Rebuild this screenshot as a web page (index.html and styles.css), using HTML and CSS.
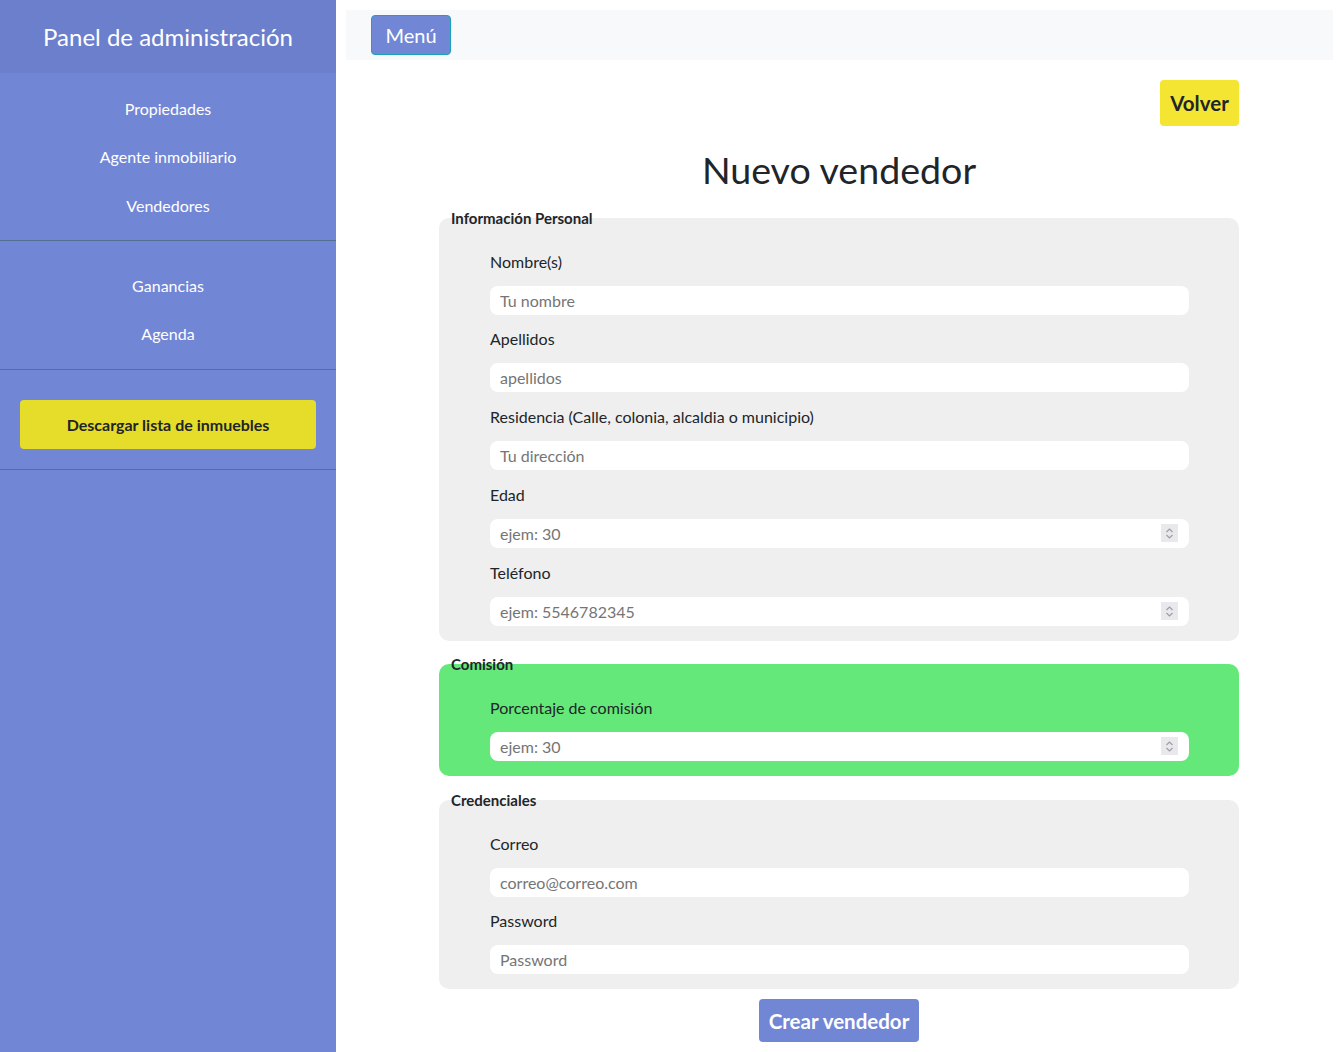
FILE: index.html
```html
<!DOCTYPE html>
<html lang="es">
<head>
<meta charset="utf-8">
<title>Nuevo vendedor</title>
<link rel="stylesheet" href="styles.css">
</head>
<body>
<div class="layout">
  <aside class="sidebar">
    <div class="sidebar-header">Panel de administración</div>
    <nav class="side-section sec-a">
      <a class="side-link" href="#">Propiedades</a>
      <a class="side-link" href="#">Agente inmobiliario</a>
      <a class="side-link" href="#">Vendedores</a>
    </nav>
    <nav class="side-section sec-b">
      <a class="side-link" href="#">Ganancias</a>
      <a class="side-link" href="#">Agenda</a>
    </nav>
    <div class="side-section sec-c">
      <a class="download-btn" href="#">Descargar lista de inmuebles</a>
    </div>
  </aside>
  <main class="main">
    <div class="topbar">
      <button class="menu-btn" type="button">Menú</button>
    </div>
    <div class="content">
      <div class="back-row"><a class="back-btn" href="#">Volver</a></div>
      <h1 class="title">Nuevo vendedor</h1>
      <form class="form">
        <fieldset class="box first">
          <legend class="box-legend">Información Personal</legend>
          <div class="fields">
            <label class="field-label">Nombre(s)</label>
            <input class="field-input tight" type="text" placeholder="Tu nombre">
            <label class="field-label">Apellidos</label>
            <input class="field-input" type="text" placeholder="apellidos">
            <label class="field-label">Residencia (Calle, colonia, alcaldia o municipio)</label>
            <input class="field-input" type="text" placeholder="Tu dirección">
            <label class="field-label">Edad</label>
            <div class="num-wrap">
              <input class="field-input num" type="number" placeholder="ejem: 30">
              <span class="spin"><svg width="17" height="17" viewBox="0 0 17 17"><path d="M5.5 7 L8.5 4 L11.5 7 M5.5 10 L8.5 13 L11.5 10" fill="none" stroke="#9d9da6" stroke-width="1.2"/></svg></span>
            </div>
            <label class="field-label">Teléfono</label>
            <div class="num-wrap last">
              <input class="field-input num" type="number" placeholder="ejem: 5546782345">
              <span class="spin"><svg width="17" height="17" viewBox="0 0 17 17"><path d="M5.5 7 L8.5 4 L11.5 7 M5.5 10 L8.5 13 L11.5 10" fill="none" stroke="#9d9da6" stroke-width="1.2"/></svg></span>
            </div>
          </div>
        </fieldset>
        <fieldset class="box green">
          <legend class="box-legend">Comisión</legend>
          <div class="fields">
            <label class="field-label">Porcentaje de comisión</label>
            <div class="num-wrap last">
              <input class="field-input num" type="number" placeholder="ejem: 30">
              <span class="spin"><svg width="17" height="17" viewBox="0 0 17 17"><path d="M5.5 7 L8.5 4 L11.5 7 M5.5 10 L8.5 13 L11.5 10" fill="none" stroke="#9d9da6" stroke-width="1.2"/></svg></span>
            </div>
          </div>
        </fieldset>
        <fieldset class="box">
          <legend class="box-legend">Credenciales</legend>
          <div class="fields">
            <label class="field-label">Correo</label>
            <input class="field-input tight" type="email" placeholder="correo@correo.com">
            <label class="field-label">Password</label>
            <input class="field-input last" type="password" placeholder="Password">
          </div>
        </fieldset>
        <div class="submit-row"><button class="submit-btn" type="button">Crear vendedor</button></div>
      </form>
    </div>
  </main>
</div>
</body>
</html>
```
FILE: styles.css
```css
* { box-sizing: border-box; }
html, body { margin: 0; padding: 0; }
body {
  font-family: Lato, "Open Sans", sans-serif;
  color: #212529;
  background: #fff;
}
.layout {
  display: flex;
  min-height: 1052px;
}
.sidebar {
  width: 336px;
  flex: 0 0 336px;
  background: #7286d6;
  color: #fff;
}
.sidebar-header {
  height: 73px;
  background: #6b7fcc;
  display: flex;
  align-items: center;
  justify-content: center;
  font-size: 24px;
}
.side-section {
  display: flex;
  flex-direction: column;
  border-bottom: 1px solid #52708f;
}
.sec-a { padding: 11px 0 10.5px; }
.sec-a .side-link { height: 48.5px; }
.sec-b { padding: 20px 0 11px; }
.sec-b .side-link { height: 48.5px; }
.sec-c { padding: 30px 20px 20px; }
.side-link {
  height: 48px;
  display: flex;
  align-items: center;
  justify-content: center;
  color: #fff;
  text-decoration: none;
  font-size: 16px;
}
.download-btn {
  height: 49px;
  display: flex;
  align-items: center;
  justify-content: center;
  background: #e6dc2a;
  border-radius: 4px;
  color: #212529;
  font-weight: 700;
  font-size: 16px;
  text-decoration: none;
}
.main {
  flex: 1;
  padding: 10px;
}
.topbar {
  height: 50px;
  background: #f8f9fa;
  display: flex;
  align-items: center;
  padding-left: 25px;
}
.menu-btn {
  height: 40px;
  width: 80px;
  background: #7286d6;
  border: 1px solid #1ba2b8;
  border-radius: 4px;
  color: #fff;
  font-family: inherit;
  font-size: 20px;
  padding: 0;
}
.content {
  width: 801px;
  padding-right: 1px;
  margin: 0 auto;
}
.back-row {
  display: flex;
  justify-content: flex-end;
  margin-top: 20px;
}
.back-btn {
  width: 79px;
  height: 46px;
  display: flex;
  align-items: center;
  justify-content: center;
  background: #f3e532;
  border-radius: 4px;
  color: #212529;
  font-weight: 700;
  font-size: 20.5px;
  text-decoration: none;
}
.title {
  margin: 20px 0 15px;
  text-align: center;
  font-weight: 400;
  font-size: 37.6px;
  line-height: 48px;
}
.box {
  margin: 0 0 15px;
  border: 0;
  border-radius: 10px;
  background: #efefef;
  padding: 0 12px 15px;
  min-width: 0;
}
.box.first { margin-bottom: 14px; }
.box.green { background: #64e87a; }
.box-legend {
  padding: 0;
  font-weight: 700;
  font-size: 15px;
  line-height: 18px;
}
.fields {
  display: flex;
  flex-direction: column;
  padding: 25px 38px 0 39px;
}
.field-label {
  font-size: 16px;
  line-height: 20px;
  margin-bottom: 14px;
}
.field-input {
  height: 29px;
  border: 0;
  border-radius: 8px;
  background: #fff;
  padding: 0 10px;
  font-family: inherit;
  font-size: 16px;
  color: #212529;
  margin-bottom: 15px;
}
.field-input.tight { margin-bottom: 14px; }
.field-input.last { margin-bottom: 0; }
.field-input::placeholder { color: #757575; }
.num-wrap {
  position: relative;
  display: flex;
  flex-direction: column;
  margin-bottom: 15px;
}
.num-wrap.last { margin-bottom: 0; }
.num-wrap .field-input { margin-bottom: 0; width: 100%; }
.field-input.num { -moz-appearance: textfield; }
.field-input.num::-webkit-inner-spin-button,
.field-input.num::-webkit-outer-spin-button {
  -webkit-appearance: none;
  margin: 0;
}
.spin {
  position: absolute;
  right: 11px;
  top: 5px;
  width: 17px;
  height: 18px;
  background: #e9e9ed;
  display: flex;
  align-items: center;
  justify-content: center;
}
.spin svg { display: block; }
.submit-row {
  display: flex;
  justify-content: center;
  margin-top: -5px;
}
.submit-btn {
  width: 160px;
  height: 43px;
  background: #7286d6;
  border: 0;
  border-radius: 4px;
  color: #fff;
  font-family: inherit;
  font-weight: 700;
  font-size: 20.5px;
  padding: 0;
}
```
